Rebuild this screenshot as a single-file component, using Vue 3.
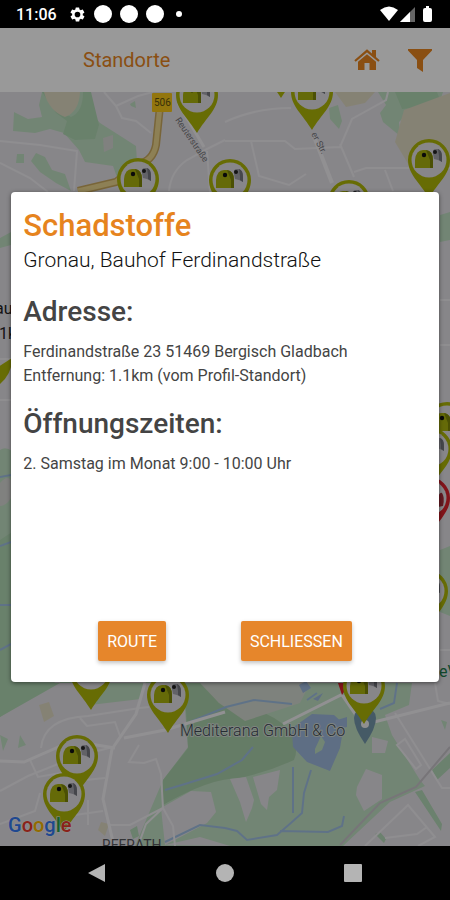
<script setup>
import { ref } from "vue";

const open = ref(true);

const place = {
  type: "Schadstoffe",
  name: "Gronau, Bauhof Ferdinandstraße",
  address: "Ferdinandstraße 23 51469 Bergisch Gladbach",
  distance: "Entfernung: 1.1km (vom Profil-Standort)",
  hours: "2. Samstag im Monat 9:00 - 10:00 Uhr",
};

// centre of every container pin on the map
const pins = [
  { x: 281, y: 60 },
  { x: 197, y: 95 },
  { x: 312, y: 92 },
  { x: 429, y: 160 },
  { x: 138, y: 179 },
  { x: 230, y: 180 },
  { x: 349, y: 201 },
  { x: 447, y: 423 },
  { x: 431, y: 449 },
  { x: 427, y: 591 },
  { x: 91, y: 672 },
  { x: 168, y: 695 },
  { x: 364, y: 686 },
  { x: 77, y: 756 },
  { x: 64, y: 794 },
];

function closeDialog() {
  open.value = false;
}
</script>

<template>
  <div class="phone">
    <div class="status-bar">
      <span class="clock">11:06</span>
      <svg class="gear" viewBox="0 0 24 24" width="17" height="17">
        <path fill="#fff" fill-rule="evenodd" d="M19.4 13a7.800 7.800 0 0 0 0-2l2.100-1.600a.5.5 0 0 0 .1-.6l-2-3.500a.5.5 0 0 0-.6-.2l-2.500 1a7.300 7.300 0 0 0-1.700-1l-.4-2.600a.5.5 0 0 0-.5-.5h-4a.5.5 0 0 0-.5.5L9 5.100a7.300 7.300 0 0 0-1.700 1l-2.500-1a.5.5 0 0 0-.6.2l-2 3.500a.5.5 0 0 0 .1.600L4.500 11a7.800 7.800 0 0 0 0 2l-2.100 1.600a.5.5 0 0 0-.1.600l2 3.500c.1.200.4.300.6.200l2.500-1a7.300 7.300 0 0 0 1.700 1l.4 2.600c0 .3.200.5.500.5h4c.3 0 .5-.2.5-.5l.4-2.600a7.300 7.300 0 0 0 1.700-1l2.500 1c.2.100.5 0 .6-.2l2-3.500a.5.5 0 0 0-.1-.6zM12 16a4 4 0 1 1 0-8 4 4 0 0 1 0 8z" />
      </svg>
      <span class="dot"></span>
      <span class="dot"></span>
      <span class="dot"></span>
      <span class="dot small"></span>
      <svg class="signals" viewBox="0 0 54 16" width="54" height="16">
        <path fill="#fff" d="M0 4Q9-3 18 4L9 15z" />
        <path fill="#666" d="M20 16L35 1v15z" />
        <path fill="#fff" d="M20 16L30 6v10z" />
        <path fill="#fff" d="M46 0h3v2h1q2 0 2 2v10q0 2-2 2h-5q-2 0-2-2V4q0-2 2-2h1z" />
      </svg>
    </div>

    <main class="screen">
      <header class="toolbar">
        <h1>Standorte</h1>
        <button type="button" aria-label="Start">
          <svg viewBox="0 0 26 22" width="26" height="22">
            <path fill="none" stroke="currentColor" stroke-width="2.200" d="M1 12L13 1.800 25 12" />
            <path fill="currentColor" d="M18 1h4v8l-4-3.500zM13 5.200l9 7.600V21h-6.500v-7h-5v7H4v-8.200z" />
          </svg>
        </button>
        <button type="button" aria-label="Filter">
          <svg viewBox="0 0 24 24" width="24" height="24">
            <path fill="currentColor" d="M0 1h24v1.500L15 12v12l-6-4v-8L0 2.500z" />
          </svg>
        </button>
      </header>

      <div class="map">
        <svg viewBox="0 92 450 754" preserveAspectRatio="xMidYMin slice">
          <defs>
            <g id="pin">
              <path fill="#acb408" d="M0-21A21 21 0 0 1 21 0C21 14 9 23 0 38C-9 23-21 14-21 0A21 21 0 0 1 0-21z" />
              <circle r="17.500" fill="#e2dfe4" />
              <path fill="#a3a4ac" d="M4-6Q3-11 7-11H9Q13-10 13-3V2L9 0 5-1z" />
              <path fill="#74767e" d="M9-11Q13-10 13-3V2L10 0V-4z" />
              <path fill="#a8b10e" d="M-14 8V0Q-13-10-6-10H-3Q4-9 4 0V8z" />
              <path fill="#7d8608" d="M-3-10Q4-9 4 0V8H1V0z" />
              <circle cx="-5" cy="-5" r="2.200" fill="#111" />
              <circle cx="6" cy="-8" r="2" fill="#222" />
            </g>
          </defs>

          <rect y="92" width="450" height="754" fill="#e2dfe5" />

          <!-- woods and meadows -->
          <g fill="#bfdec2">
            <path d="M42 92h44l4 20 10 11 22 14 14 9 2 31-20 3-5-14-28-4-6-12-15-17-14-4-15 4-22-2 1-19 14 7 14-2-3-12z" />
            <path d="M17 154h7v9h-8zM36 153l9 4 7 13 13 4 6 17-15-8-16-11-9-11zM130 104l5-3 1 7-5-2z" />
            <path d="M329 108l9-3 4 16-3 8-9-10zM378 92h65l-5 15-27 3-12 12 1 14-17-14-3-9 6-8z" />
            <path d="M0 238l11-6v13l-11 3zM440 215l10-3v28l-10 2zM440 550l10-4v70l-10-4z" />
            <path d="M0 450q9-6 20 10l40 223h352l-3 22-24 10 7 20 28 45 5 6-35 16-47 44H135l28-66 25-33-4-50-35-24-8 26-51 6 5-10-23-15-10-2L0 717z" />
            <path d="M20 735l6 10-8 3zM0 735l8 4-5 12zM441 720l6 2-2 8z" />
          </g>
          <path fill="#b0d7b3" d="M42 92l14 21 11 8-4 13 12 6 20-1 4-14-8-33h-8q0 20-12 25l-12-7-13-18z" />
          <path fill="#b0d7b3" d="M0 540l30-20v163H60L0 717zM395 92h42l5 13-40 4z" />
          <path fill="#a9cfaa" d="M182 683h20l17 20q44 2 71 27 10 16 4 30-26 12-54 18-30 0-77 27v-25l25-32-2-37z" />
          <path fill="#ded9c2" d="M44 92h36q-1 20-15 25-16-6-21-25zM335 92h40l-10 11-19 4zM404 110l46-17v74h-40l-15-25zM39 705l10-3 5 14-10 6zM101 822l8 2-4 12-7-6z" />
          <path fill="#d3d9d0" d="M200 683h110l-10 20-55 18-26-18z" />
          <path fill="#d6d7d4" d="M0 483q7-8 11-3v18q-5 8-11 8zM103 138l10-3v13l-9 4z" />
          <path fill="#e2dfe5" d="M165 845l-4-37 30-17 20 1 5 20-9 11zM165 845l35-8 30 9zM230 779l16-2 8 23-2 8-6 14-6-20zM253 777l27-7-3 20-8 7-2 13-6-6zM357 787l9-18 16 6v24l-18 12-8-16zM372 737l16 4-3 12h-13z" />
          <g fill="#b3d7b7">
            <path d="M415 792l7-2 20 34-1 7zM375 834l5-2 6 7-2 4zM432 770l18-17v15l-13 12zM130 830l7-4 2 10-6 3z" />
          </g>

          <!-- water -->
          <path fill="#9db8dc" d="M295 726l17-12 22 1 10 9-4 24-10 23-23-9-14-15-1-15zM337 720l10-3v10l-8 2zM299 685l7-4 5 7-8 5zM313 699l10-6-5 8z" />
          <path fill="#bfdec2" d="M321 736l4 6-3 8-7 4v-5z" />
          <g fill="none" stroke="#9fbfe2" stroke-width="2">
            <path d="M225 828l12 3 10 9 30-5 15-13 10-9 2-20 7-23M293 767v46M280 831l48 1 14-6 2-10M190 722l36-15 28-7 38 4M165 790l20-6 32-10 25-14 11-13M165 842l35-17 25 3M0 477l11-2M0 546l11-4M0 605h11M0 650l11-6M397 683l-3 20-14 6M307 700l10-7" />
          </g>

          <!-- local roads -->
          <g fill="none" stroke="#eeedf1" stroke-width="2">
            <path d="M0 141l40 4 37 6-3 40M0 163l30 15 18 14M104 92l12 14 22-10 15-4M116 106l6 12 14 3 15 12M169 191q2-20 18-31l20-11 18-9M207 151l3 41M225 122q30-14 66-14M225 141h60l10 8 45-2 12-28 34-19 2-8M251 141l8 35 30 9 17-11M340 144l14 33M354 172l12-4h84M385 170l8 21" />
            <path d="M41 748q3-30 47-32l52-8 9-1M80 718l7 8 28-4 5 14M0 791l28-15 50-20 35-9M30 760l8 17 40-7M0 824l35-13 5-18M75 815l28-4M85 780l20-2M88 800v25M110 825l20 0 33-17-2-34-5-15-12 4-15-1 10-17M163 808l10 18 2 20M163 808l-17 16-8 22" />
            <path d="M395 713l47 75h8M397 745l8-6 16 26-5 4zM365 846l43-41 27 32-17 9M385 838l32-4 10-7M435 683l3 18 12 3M0 359h11M0 400h11M440 300h10M440 345h10M440 650h10" />
          </g>
          <path d="M313 134l19 49" fill="none" stroke="#f2f1f4" stroke-width="4" />
          <g fill="none" stroke="#f2f1f4" stroke-width="3">
            <path d="M145 683l-9 31-24 35-9 50 4 17 7 30M0 761l24 1 48-21 43 7M124 738l41-8 60-18M178 103l26 44M357 704l-16-9-58 29M374 722l76-19M342 695l22 32" />
          </g>
          <path d="M340 845l40-42 36-16 34-40" fill="none" stroke="#c6c3c9" stroke-width="2" />

          <!-- federal road -->
          <path d="M160 106l-4 39q-3 16-18 19l-22 18-38 9" fill="none" stroke="#c9a95f" stroke-width="8" />
          <path d="M160 106l-4 39q-3 16-18 19l-22 18-38 9" fill="none" stroke="#ecd58e" stroke-width="5" />
          <rect x="152" y="93" width="20" height="19" rx="1" fill="#f5c518" />
          <text class="road-label" x="154" y="106">506</text>
          <text class="street" transform="translate(175 120) rotate(56)">Reuterstraße</text>
          <text class="street" transform="translate(311 134) rotate(62)">er Str.</text>

          <path d="M354 718q0-9 11-9t11 9q0 10-11 26-11-16-11-26z" fill="#7496ab" />
          <circle cx="365" cy="724" r="4" fill="#eee" />
          <path d="M338 683l4 12 8-12z" fill="#d9222c" />
          <g transform="translate(429 498)">
            <path fill="#d9222c" d="M0-21A21 21 0 0 1 21 0C21 14 9 23 0 38C-9 23-21 14-21 0A21 21 0 0 1 0-21z" />
            <circle r="17.500" fill="#e2dfe4" />
            <path d="M9 9V-1q2-5 4-4 3 4 1 13z" fill="#a62c3a" />
          </g>
          <path d="M12 358v3Q11 377-5 388v-19z" fill="#acb408" />

          <use v-for="(pin, index) in pins" :key="index" href="#pin" :x="pin.x" :y="pin.y" />

          <text class="place-label" x="180" y="736">Mediterana GmbH &amp; Co</text>
          <text class="town-label" x="102" y="850">REFRATH</text>
          <text class="edge-label" x="-5" y="314">au</text>
          <text class="edge-label" x="-1" y="339">1k</text>
          <text class="shop-label" x="439" y="677">eV</text>
          <text class="google" x="8" y="832"><tspan fill="#3478f0">G</tspan><tspan fill="#e63a2c">o</tspan><tspan fill="#f5b400">o</tspan><tspan fill="#3478f0">g</tspan><tspan fill="#2aa04c">l</tspan><tspan fill="#e63a2c">e</tspan></text>
        </svg>
      </div>

      <div v-if="open" class="backdrop">
        <section class="dialog" role="dialog" aria-labelledby="dialog-title">
          <h2 id="dialog-title">{{ place.type }}</h2>
          <p class="name">{{ place.name }}</p>
          <h3>Adresse:</h3>
          <p>{{ place.address }}</p>
          <p>{{ place.distance }}</p>
          <h3>Öffnungszeiten:</h3>
          <p>{{ place.hours }}</p>
          <div class="actions">
            <button type="button">ROUTE</button>
            <button type="button" @click="closeDialog">SCHLIESSEN</button>
          </div>
        </section>
      </div>
    </main>

    <nav class="nav-bar">
      <button type="button" aria-label="Zurück">
        <svg viewBox="0 0 20 20" width="20" height="20"><path d="M1 10L18 1v18z" /></svg>
      </button>
      <button type="button" aria-label="Startbildschirm">
        <svg viewBox="0 0 20 20" width="20" height="20"><circle cx="10" cy="10" r="9" /></svg>
      </button>
      <button type="button" aria-label="Übersicht">
        <svg viewBox="0 0 20 20" width="20" height="20"><rect x="1" y="1" width="18" height="18" rx="1" /></svg>
      </button>
    </nav>
  </div>
</template>

<style>
body {
  margin: 0;
  background: #000;
}
</style>

<style scoped>
.phone {
  display: flex;
  flex-direction: column;
  min-height: 100vh;
  font-family: Roboto, "Liberation Sans", sans-serif;
}

.status-bar {
  display: flex;
  align-items: center;
  gap: 8px;
  height: 28px;
  padding: 0 16px;
  background: #000;
  color: #fff;
}

.clock {
  margin-right: 4px;
  font-size: 16px;
  font-weight: 500;
}

.dot {
  width: 18px;
  height: 18px;
  border-radius: 50%;
  background: #fff;
}

.dot.small {
  width: 6px;
  height: 6px;
  margin-left: 4px;
}

.signals {
  margin-left: auto;
}

.screen {
  position: relative; /* the backdrop covers toolbar and map */
  display: flex;
  flex: 1;
  flex-direction: column;
}

.toolbar {
  display: flex;
  align-items: center;
  gap: 28px;
  height: 64px;
  padding: 0 18px 0 83px;
  background: #fff;
  color: #e6841e;
}

.toolbar h1 {
  flex: 1;
  margin: 0;
  font-size: 20px;
  font-weight: 400;
  line-height: 28px;
}

.toolbar button {
  display: flex;
  padding: 0;
  border: 0;
  background: none;
  color: inherit;
}

.map {
  display: flex;
  flex: 1;
}

.map svg {
  width: 100%;
}

.road-label {
  font-size: 10px;
  fill: #5f5210;
}

.street {
  font-size: 9px;
  fill: #77777c;
}

.place-label {
  font-size: 16px;
  font-weight: 300;
  fill: #3f4a55;
  stroke: #d3dcd6;
  stroke-width: 2px;
  paint-order: stroke;
}

.town-label {
  font-size: 14px;
  fill: #55565b;
}

.edge-label {
  font-size: 16px;
  fill: #222;
}

.shop-label {
  font-size: 16px;
  fill: #1c7a4b;
}

.google {
  font-size: 20px;
  font-weight: 500;
  stroke: #eee;
  stroke-width: 1px;
  paint-order: stroke;
}

.backdrop {
  position: absolute;
  inset: 0;
  display: flex;
  align-items: center;
  justify-content: center;
  background: rgba(0, 0, 0, 0.4);
}

.dialog {
  display: flex;
  flex-direction: column;
  box-sizing: border-box;
  width: 95%;
  min-height: 60%;
  padding: 16px 12px 21px;
  border-radius: 4px;
  background: #fff;
  box-shadow: 0 1px 4px rgba(0, 0, 0, 0.5);
  color: #444;
}

.dialog h2 {
  margin: 0;
  font-size: 31px;
  font-weight: 500;
  line-height: 36px;
  color: #e6841e;
}

.dialog h3 {
  margin: 20px 0 12px;
  font-size: 28px;
  font-weight: 500;
  line-height: 32px;
}

.dialog p {
  margin: 0;
  font-size: 16px;
  line-height: 24px;
}

.dialog .name {
  font-size: 21px;
  font-weight: 300;
  line-height: 32px;
  color: #111;
}

.actions {
  display: flex;
  justify-content: space-evenly;
  margin-top: auto;
}

.actions button {
  height: 40px;
  padding: 0 9px;
  border: 0;
  border-radius: 2px;
  background: #e6862b;
  box-shadow: 0 2px 4px rgba(0, 0, 0, 0.25);
  color: #fff;
  font-family: inherit;
  font-size: 16px;
}

.nav-bar {
  display: flex;
  align-items: center;
  justify-content: space-evenly;
  height: 54px;
  background: #000;
}

.nav-bar button {
  display: flex;
  padding: 0 21px;
  border: 0;
  background: none;
}

.nav-bar svg {
  fill: #b4b4b4;
}
</style>
